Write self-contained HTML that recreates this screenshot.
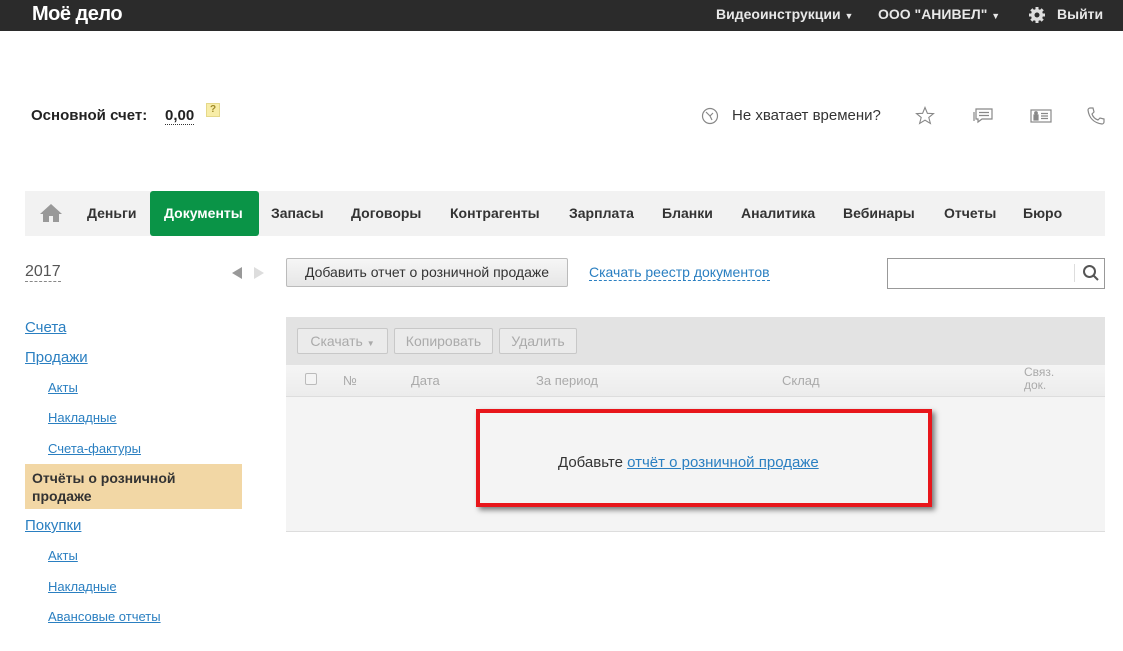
<!DOCTYPE html>
<html><head><meta charset="utf-8"><style>
*{margin:0;padding:0;box-sizing:border-box}
body{width:1123px;height:651px;position:relative;background:#fff;font-family:"Liberation Sans",Arial,sans-serif;overflow:hidden;color:#333}
.a{position:absolute;white-space:nowrap}
.top{position:absolute;left:0;top:0;width:1123px;height:31px;background:#2b2b2b}
.tl{color:#e8e8e8;font-weight:bold;font-size:14px;top:6px}
.nav{position:absolute;left:25px;top:191px;width:1080px;height:45px;background:#f2f2f2}
.ni{position:absolute;top:14px;font-size:14px;font-weight:bold;color:#333}
.lk{color:#2a7fc1;text-decoration:underline;font-size:15px}
.sl{color:#2a7fc1;text-decoration:underline;font-size:13px}
.btn{position:absolute;border:1px solid #c8c8c8;border-radius:2px;background:#ebebeb;font-size:14px;color:#aaa;text-align:center;line-height:24px;height:26px}
.th{position:absolute;top:373px;font-size:13px;color:#aaa}
</style></head><body>
<div class="top"></div>
<div class="a" style="left:32px;top:3px;color:#fff;font-weight:bold;font-size:20px;letter-spacing:-0.5px">Моё дело</div>
<div class="a tl" style="left:716px">Видеоинструкции <span style="font-size:9px">▼</span></div>
<div class="a tl" style="left:878px">ООО "АНИВЕЛ" <span style="font-size:9px">▼</span></div>
<svg class="a" style="left:1028px;top:6px" width="18" height="18" viewBox="0 0 18 18"><circle cx="9" cy="9" r="6" fill="#ddd"/><g stroke="#ddd" stroke-width="3"><line x1="9" y1="1" x2="9" y2="17"/><line x1="1" y1="9" x2="17" y2="9"/><line x1="3.3" y1="3.3" x2="14.7" y2="14.7"/><line x1="14.7" y1="3.3" x2="3.3" y2="14.7"/></g><circle cx="9" cy="9" r="2.5" fill="#2b2b2b"/></svg>
<div class="a tl" style="left:1057px">Выйти</div>

<div class="a" style="left:31px;top:107px;font-size:15px;font-weight:bold;color:#222">Основной счет:</div>
<div class="a" style="left:165px;top:107px;font-size:15px;font-weight:bold;color:#222;border-bottom:1px dotted #333;line-height:17px">0,00</div>
<div class="a" style="left:206px;top:103px;width:14px;height:14px;background:#f8eda8;border:1px solid #e5d88a;font-size:10px;color:#a08a2a;text-align:center;line-height:12px;font-weight:bold">?</div>

<svg class="a" style="left:701px;top:107px" width="18" height="18" viewBox="0 0 18 18" fill="none" stroke="#888" stroke-width="1.2"><circle cx="9" cy="9" r="7.5"/><path d="M9 9 L5 5 M9 9 L12 6 M9 9 L11 13"/></svg>
<div class="a" style="left:732px;top:107px;font-size:15px;color:#333">Не хватает времени?</div>
<svg class="a" style="left:915px;top:106px" width="20" height="20" viewBox="0 0 20 20" fill="none" stroke="#888" stroke-width="1.1"><path d="M10 1.5 L12.4 7.3 L18.5 7.6 L13.8 11.5 L15.4 17.5 L10 14.2 L4.6 17.5 L6.2 11.5 L1.5 7.6 L7.6 7.3 Z"/></svg>
<svg class="a" style="left:972px;top:107px" width="22" height="18" viewBox="0 0 22 18" fill="none" stroke="#888" stroke-width="1.2"><path d="M4 2 H20 V12 H10 L6 15 V12 H4 Z"/><path d="M2 5 V14"/><path d="M7 5.5 H17 M7 8.5 H17"/></svg>
<svg class="a" style="left:1030px;top:108px" width="22" height="16" viewBox="0 0 22 16" fill="none" stroke="#888" stroke-width="1.2"><rect x="1" y="2" width="20" height="12"/><rect x="4" y="7" width="4" height="5" fill="#888"/><circle cx="6" cy="5" r="1.3" fill="#888"/><path d="M11 5.5 H18 M11 8 H18 M11 10.5 H18"/></svg>
<svg class="a" style="left:1086px;top:106px" width="20" height="20" viewBox="0 0 20 20" fill="none" stroke="#888" stroke-width="1.2"><path d="M4 2 L7 2 L8 6 L6 8 C7 11 9 13 12 14 L14 12 L18 13 L18 16 C18 17 17 18 16 18 C8 17 3 12 2 4 C2 3 3 2 4 2 Z"/></svg>

<div class="nav">
<svg class="a" style="left:14px;top:12px" width="24" height="20" viewBox="0 0 24 20"><path d="M12 1 L23 11 H20 V19 H14 V13 H10 V19 H4 V11 H1 Z" fill="#999"/></svg>
<div class="ni" style="left:62px">Деньги</div>
<div class="a" style="left:125px;top:0;width:109px;height:45px;background:#0a9447;border-radius:3px"></div>
<div class="ni" style="left:139px;color:#fff">Документы</div>
<div class="ni" style="left:246px">Запасы</div>
<div class="ni" style="left:326px">Договоры</div>
<div class="ni" style="left:425px">Контрагенты</div>
<div class="ni" style="left:544px">Зарплата</div>
<div class="ni" style="left:637px">Бланки</div>
<div class="ni" style="left:716px">Аналитика</div>
<div class="ni" style="left:818px">Вебинары</div>
<div class="ni" style="left:919px">Отчеты</div>
<div class="ni" style="left:998px">Бюро</div>
</div>

<div class="a" style="left:25px;top:263px;font-size:16px;color:#555;border-bottom:1px dashed #888;line-height:18px">2017</div>
<div class="a" style="left:232px;top:267px;width:0;height:0;border-top:6px solid transparent;border-bottom:6px solid transparent;border-right:10px solid #999"></div>
<div class="a" style="left:254px;top:267px;width:0;height:0;border-top:6px solid transparent;border-bottom:6px solid transparent;border-left:10px solid #ddd"></div>

<div class="a lk" style="left:25px;top:319px">Счета</div>
<div class="a lk" style="left:25px;top:349px">Продажи</div>
<div class="a sl" style="left:48px;top:380px">Акты</div>
<div class="a sl" style="left:48px;top:410px">Накладные</div>
<div class="a sl" style="left:48px;top:441px">Счета-фактуры</div>
<div class="a" style="left:25px;top:464px;width:217px;height:45px;background:#f2d7a5"></div>
<div class="a" style="left:32px;top:469px;font-size:14px;font-weight:bold;color:#333;line-height:18px">Отчёты о розничной<br>продаже</div>
<div class="a lk" style="left:25px;top:517px">Покупки</div>
<div class="a sl" style="left:48px;top:548px">Акты</div>
<div class="a sl" style="left:48px;top:579px">Накладные</div>
<div class="a sl" style="left:48px;top:609px">Авансовые отчеты</div>

<div class="a" style="left:286px;top:258px;width:282px;height:29px;border:1px solid #bbb;border-radius:2px;background:linear-gradient(#f6f6f6,#e6e6e6);font-size:14px;color:#333;text-align:center;line-height:27px">Добавить отчет о розничной продаже</div>
<div class="a" style="left:589px;top:264px;font-size:14px;color:#2a7fc1;border-bottom:1px dashed #2a7fc1;line-height:16px">Скачать реестр документов</div>
<div class="a" style="left:887px;top:258px;width:218px;height:31px;border:1px solid #999;background:#fff"></div>
<div class="a" style="left:1074px;top:264px;width:1px;height:18px;background:#ddd"></div>
<svg class="a" style="left:1082px;top:264px" width="18" height="18" viewBox="0 0 18 18" fill="none" stroke="#555" stroke-width="2"><circle cx="7.5" cy="7.5" r="5.5"/><path d="M11.5 11.5 L16 16"/></svg>

<div class="a" style="left:286px;top:317px;width:819px;height:48px;background:#e3e3e3"></div>
<div class="btn" style="left:297px;top:328px;width:91px">Скачать <span style="font-size:8px">▼</span></div>
<div class="btn" style="left:394px;top:328px;width:99px">Копировать</div>
<div class="btn" style="left:499px;top:328px;width:78px">Удалить</div>
<div class="a" style="left:286px;top:365px;width:819px;height:32px;background:linear-gradient(#f5f5f5,#ececec);border-bottom:1px solid #ddd"></div>
<div class="a" style="left:305px;top:373px;width:12px;height:12px;border:1px solid #bbb;border-radius:2px;background:#f4f4f4"></div>
<div class="th" style="left:343px">№</div>
<div class="th" style="left:411px">Дата</div>
<div class="th" style="left:536px">За период</div>
<div class="th" style="left:782px">Склад</div>
<div class="a" style="left:1024px;top:366px;font-size:12px;color:#aaa;line-height:13px">Связ.<br>док.</div>
<div class="a" style="left:286px;top:397px;width:819px;height:135px;background:#f4f4f4;border-bottom:1px solid #ddd"></div>
<div class="a" style="left:476px;top:409px;width:456px;height:98px;border:4px solid #e8161b;box-shadow:3px 3px 5px rgba(0,0,0,0.5)"></div>
<div class="a" style="left:558px;top:454px;font-size:15px;color:#333">Добавьте <span style="color:#2a7fc1;text-decoration:underline">отчёт о розничной продаже</span></div>
</body></html>
